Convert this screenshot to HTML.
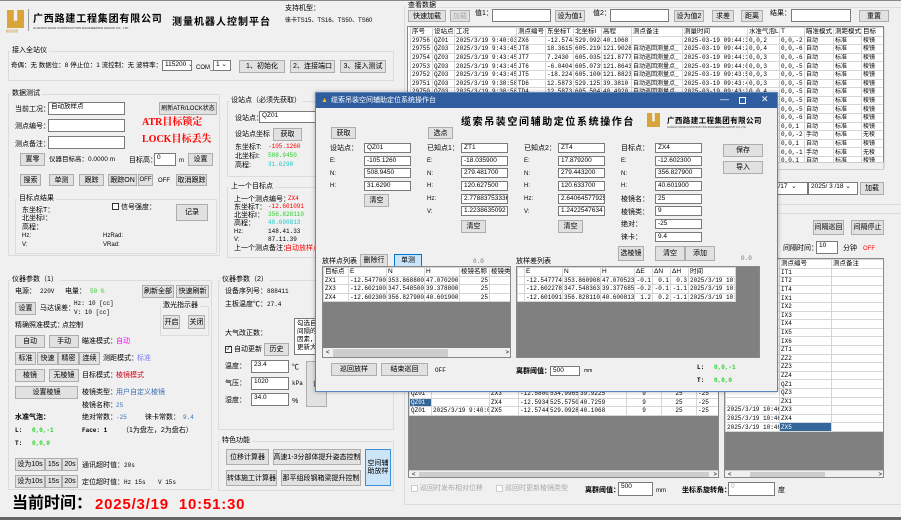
<!DOCTYPE html>
<html><head><meta charset="utf-8">
<style>
*{box-sizing:border-box;margin:0;padding:0}
body{width:901px;height:520px;overflow:hidden;background:#f0f0f0;font-family:"Liberation Sans","Noto Sans CJK SC",sans-serif;font-size:7px;color:#000;position:relative}
.a{position:absolute;white-space:nowrap;line-height:1}
.b{position:absolute;background:#e1e1e1;border:1px solid #adadad;text-align:center;font-size:7px;line-height:1;display:flex;align-items:center;justify-content:center;white-space:nowrap}
.i{position:absolute;background:#fff;border:1px solid #7a7a7a;font-size:6.5px;padding:1px 2px;line-height:1;white-space:nowrap;overflow:hidden}
.g{position:absolute;border:1px solid #dcdcdc}
.gl{position:absolute;background:#f0f0f0;padding:0 2px;font-size:7px;line-height:1;white-space:nowrap}
.m{font-family:"Liberation Mono","Noto Sans CJK SC",monospace}
table{border-collapse:collapse;table-layout:fixed}
.tb td{border:1px solid #d6d6d6;height:8.6px;padding:0 1px;font-size:6px;line-height:7px;white-space:nowrap;overflow:hidden;font-family:"Liberation Mono","Noto Sans CJK SC",monospace}
.tb tr.h td{font-family:"Liberation Sans","Noto Sans CJK SC",sans-serif;background:#fff;font-size:6.5px}
.red{color:#f00}.grn{color:#2ad02a}.cy{color:#1cc7c7}
</style></head><body>
<div style="position:absolute;left:0;top:0;width:901px;height:1px;background:#888"></div>
<div style="position:absolute;left:0;top:517px;width:901px;height:3px;background:#666"></div>

<!-- header -->
<div class="a" style="left:7px;top:10px;width:17px;height:18px;background:#d9a43a;clip-path:polygon(0 0,40% 0,40% 60%,60% 60%,60% 0,100% 0,100% 100%,0 100%)"></div>
<div class="a" style="left:6px;top:30px;font-size:3px;color:#c8962e">路建集团</div>
<div class="a" style="left:28px;top:9px;width:1px;height:22px;background:#999"></div>
<div class="a" style="left:33px;top:15px;font-size:10px;font-weight:bold;letter-spacing:0.8px">广西路建工程集团有限公司</div>
<div class="a" style="left:33px;top:27px;font-size:3px;color:#333">GUANGXI ROAD CONSTRUCTION ENGINEERING GROUP CO., LTD.</div>
<div class="a" style="left:172px;top:18px;font-size:10px;font-weight:bold;letter-spacing:1px">测量机器人控制平台</div>
<div class="a" style="left:285px;top:5px">支持机型：</div>
<div class="a" style="left:285px;top:18px;font-size:6px">徕卡TS15、TS16、TS50、TS60</div>

<!-- 接入全站仪 -->
<div class="g" style="left:8px;top:51px;width:386px;height:30px"></div>
<div class="gl" style="left:10px;top:47px">接入全站仪</div>
<div class="a" style="left:11px;top:63px;font-size:6.5px">奇偶：无 数据位：8 停止位：1 流控制：无 波特率：</div>
<div class="i" style="left:162px;top:60px;width:30px;height:11px">115200 ⌄</div>
<div class="a" style="left:196px;top:65px;font-size:6px">COM_</div>
<div class="i" style="left:213px;top:60px;width:18px;height:11px">1 ⌄</div>
<div class="b" style="left:239px;top:60px;width:46px;height:13px">1、初始化</div>
<div class="b" style="left:290px;top:60px;width:45px;height:13px">2、连接端口</div>
<div class="b" style="left:340px;top:60px;width:46px;height:13px">3、接入测试</div>

<!-- 数据测试 -->
<div class="g" style="left:8px;top:94px;width:212px;height:162px"></div>
<div class="gl" style="left:10px;top:90px">数据测试</div>
<div class="a" style="left:15px;top:106px">当前工况：</div>
<div class="i" style="left:48px;top:102px;width:77px;height:13px">自动放样点</div>
<div class="b" style="left:159px;top:102px;width:58px;height:13px;font-size:6px">刷新ATR/LOCK状态</div>
<div class="a" style="left:15px;top:123px">测点编号：</div>
<div class="i" style="left:48px;top:119px;width:77px;height:13px"></div>
<div class="a" style="left:15px;top:141px">测点备注：</div>
<div class="i" style="left:48px;top:136px;width:77px;height:13px"></div>
<div class="a red" style="left:142px;top:118px;font-size:10px;font-family:'Liberation Serif','Noto Serif CJK SC',serif;font-weight:bold">ATR目标锁定</div>
<div class="a red" style="left:142px;top:135px;font-size:10px;font-family:'Liberation Serif','Noto Serif CJK SC',serif;font-weight:bold">LOCK目标丢失</div>
<div class="b" style="left:20px;top:153px;width:25px;height:13px">置零</div>
<div class="a" style="left:49px;top:157px;font-size:6.5px">仪器目标高：0.0000 m</div>
<div class="a" style="left:129px;top:157px">目标高：</div>
<div class="i" style="left:154px;top:153px;width:22px;height:13px">0</div>
<div class="a" style="left:179px;top:158px;font-size:6px">m</div>
<div class="b" style="left:188px;top:153px;width:25px;height:13px">设置</div>
<div class="b" style="left:20px;top:174px;width:21px;height:12px">搜索</div>
<div class="b" style="left:49px;top:174px;width:25px;height:12px">单测</div>
<div class="b" style="left:79px;top:174px;width:25px;height:12px">跟踪</div>
<div class="b" style="left:108px;top:174px;width:29px;height:12px">跟踪ON</div>
<div class="b" style="left:138px;top:174px;width:15px;height:12px;font-size:6px">OFF</div>
<div class="a" style="left:158px;top:178px;font-size:6px">OFF</div>
<div class="b" style="left:176px;top:174px;width:31px;height:12px">取消跟踪</div>
<div class="g" style="left:15px;top:199px;width:202px;height:55px"></div>
<div class="gl" style="left:17px;top:195px">目标点结果</div>
<div class="a" style="left:22px;top:207px">东坐标T：</div>
<div class="a" style="left:22px;top:215px">北坐标I：</div>
<div class="a" style="left:22px;top:224px">高程：</div>
<div class="a" style="left:22px;top:233px;font-size:6px">Hz:</div>
<div class="a" style="left:22px;top:242px;font-size:6px">V:</div>
<div class="a" style="left:103px;top:233px;font-size:6px">HzRad:</div>
<div class="a" style="left:103px;top:242px;font-size:6px">VRad:</div>
<div class="a" style="left:112px;top:203px;width:7px;height:7px;border:1px solid #333;background:#fff"></div>
<div class="a" style="left:121px;top:204px">信号强度：</div>
<div class="b" style="left:176px;top:204px;width:32px;height:17px">记录</div>

<!-- 设站点 middle -->
<div class="g" style="left:227px;top:101px;width:100px;height:76px"></div>
<div class="gl" style="left:229px;top:97px">设站点（必须先获取）</div>
<div class="a" style="left:235px;top:115px">设站点：</div>
<div class="i" style="left:259px;top:111px;width:70px;height:12px">QZ01</div>
<div class="a" style="left:235px;top:131px">设站点坐标</div>
<div class="b" style="left:273px;top:128px;width:29px;height:13px">获取</div>
<div class="a" style="left:235px;top:144px">东坐标T:</div><div class="a m red" style="left:268px;top:144px;font-size:6px">-105.1260</div>
<div class="a" style="left:235px;top:153px">北坐标I:</div><div class="a m grn" style="left:268px;top:153px;font-size:6px">508.9450</div>
<div class="a" style="left:235px;top:162px">高程:</div><div class="a m cy" style="left:268px;top:162px;font-size:6px">31.6290</div>
<div class="g" style="left:227px;top:187px;width:100px;height:71px"></div>
<div class="gl" style="left:229px;top:183px">上一个目标点</div>
<div class="a" style="left:234px;top:196px">上一个测点编号：</div><div class="a m red" style="left:288px;top:196px;font-size:6px">ZX4</div>
<div class="a" style="left:234px;top:204px">东坐标T：</div><div class="a m red" style="left:268px;top:204px;font-size:6px">-12.601091</div>
<div class="a" style="left:234px;top:212px">北坐标I：</div><div class="a m grn" style="left:268px;top:212px;font-size:6px">356.828110</div>
<div class="a" style="left:234px;top:220px">高程：</div><div class="a m cy" style="left:268px;top:220px;font-size:6px">40.600813</div>
<div class="a" style="left:234px;top:229px;font-size:6px">Hz:</div><div class="a m" style="left:268px;top:229px;font-size:6px">148.41.33</div>
<div class="a" style="left:234px;top:237px;font-size:6px">V:</div><div class="a m" style="left:268px;top:237px;font-size:6px">87.11.39</div>
<div class="a" style="left:234px;top:245px">上一个测点备注：</div><div class="a red" style="left:285px;top:245px">自动放样点</div>

<!-- 仪器参数1 -->
<div class="g" style="left:8px;top:280px;width:204px;height:210px"></div>
<div class="gl" style="left:10px;top:276px">仪器参数（1）</div>
<div class="a" style="left:15px;top:288px">电源：</div><div class="a m" style="left:40px;top:289px;font-size:6px">220V</div>
<div class="a" style="left:65px;top:288px">电量：</div><div class="a m grn" style="left:90px;top:289px;font-size:6px">50 %</div>
<div class="b" style="left:142px;top:285px;width:32px;height:13px">刷新全部</div>
<div class="b" style="left:176px;top:285px;width:33px;height:13px">快速刷新</div>
<div class="b" style="left:15px;top:302px;width:21px;height:13px">设置</div>
<div class="a" style="left:40px;top:305px">马达误差：</div>
<div class="a m" style="left:74px;top:301px;font-size:6px">Hz: 10 [cc]</div>
<div class="a m" style="left:74px;top:310px;font-size:6px">V:  10 [cc]</div>
<div class="g" style="left:160px;top:306px;width:49px;height:30px"></div>
<div class="gl" style="left:161px;top:302px">激光指示器</div>
<div class="b" style="left:163px;top:315px;width:17px;height:14px">开启</div>
<div class="b" style="left:188px;top:315px;width:17px;height:14px">关闭</div>
<div class="a" style="left:15px;top:322px">精确照准模式：</div><div class="a" style="left:62px;top:322px">点控制</div>
<div class="b" style="left:15px;top:335px;width:30px;height:13px">自动</div>
<div class="b" style="left:49px;top:335px;width:30px;height:13px">手动</div>
<div class="a" style="left:82px;top:338px">瞄准模式：</div><div class="a" style="left:116px;top:338px;color:#f0f">自动</div>
<div class="b" style="left:15px;top:352px;width:21px;height:13px">标准</div>
<div class="b" style="left:37px;top:352px;width:21px;height:13px">快速</div>
<div class="b" style="left:58px;top:352px;width:21px;height:13px">精密</div>
<div class="b" style="left:79px;top:352px;width:21px;height:13px">连续</div>
<div class="a" style="left:103px;top:355px">测距模式：</div><div class="a" style="left:137px;top:355px;color:#7d7dff">标准</div>
<div class="b" style="left:15px;top:369px;width:30px;height:13px">棱镜</div>
<div class="b" style="left:49px;top:369px;width:30px;height:13px">无棱镜</div>
<div class="a" style="left:82px;top:372px">目标模式：</div><div class="a" style="left:116px;top:372px;color:#d0021b">棱镜模式</div>
<div class="b" style="left:15px;top:386px;width:63px;height:13px">设置棱镜</div>
<div class="a" style="left:82px;top:389px">棱镜类型：</div><div class="a" style="left:116px;top:389px;color:#3a6fb0">用户自定义棱镜</div>
<div class="a" style="left:82px;top:402px">棱镜名称：</div><div class="a m" style="left:116px;top:403px;font-size:6px;color:#3a6fb0">25</div>
<div class="a" style="left:15px;top:414px;font-weight:bold">水准气泡：</div>
<div class="a" style="left:82px;top:414px">绝对常数：</div><div class="a m" style="left:116px;top:415px;font-size:6px;color:#3a6fb0">-25</div>
<div class="a" style="left:145px;top:414px">徕卡常数：</div><div class="a m" style="left:183px;top:415px;font-size:6px;color:#3a6fb0">9.4</div>
<div class="a m" style="left:15px;top:428px;font-size:6px;font-weight:bold">L:</div><div class="a m grn" style="left:32px;top:428px;font-size:6px;font-weight:bold">0,0,-1</div>
<div class="a m" style="left:82px;top:428px;font-size:6px;font-weight:bold">Face:  1</div><div class="a" style="left:122px;top:427px">（1为盘左，2为盘右）</div>
<div class="a m" style="left:15px;top:441px;font-size:6px;font-weight:bold">T:</div><div class="a m grn" style="left:32px;top:441px;font-size:6px;font-weight:bold">0,0,0</div>
<div class="b" style="left:15px;top:458px;width:30px;height:13px">设为10s</div>
<div class="b" style="left:45px;top:458px;width:17px;height:13px">15s</div>
<div class="b" style="left:62px;top:458px;width:16px;height:13px">20s</div>
<div class="a" style="left:82px;top:462px">通讯超时值：</div><div class="a m" style="left:124px;top:463px;font-size:6px">20s</div>
<div class="b" style="left:15px;top:475px;width:30px;height:13px">设为10s</div>
<div class="b" style="left:45px;top:475px;width:17px;height:13px">15s</div>
<div class="b" style="left:62px;top:475px;width:16px;height:13px">20s</div>
<div class="a" style="left:82px;top:479px">定位超时值：</div><div class="a m" style="left:124px;top:480px;font-size:6px">Hz 15s</div><div class="a m" style="left:158px;top:480px;font-size:6px">V 15s</div>

<!-- 仪器参数2 -->
<div class="g" style="left:218px;top:280px;width:176px;height:150px"></div>
<div class="gl" style="left:220px;top:276px">仪器参数（2）</div>
<div class="a" style="left:225px;top:288px">设备序列号：</div><div class="a m" style="left:267px;top:289px;font-size:6px">888411</div>
<div class="a" style="left:225px;top:301px">主板温度℃：</div><div class="a m" style="left:267px;top:302px;font-size:6px">27.4</div>
<div class="a" style="left:225px;top:330px">大气改正数：</div>
<div class="i" style="left:294px;top:318px;width:30px;height:37px;line-height:8px;font-size:6.5px;white-space:normal">勾选自<br>间隔的<br>因素，<br>更新大</div>
<div class="a" style="left:225px;top:346px;width:7px;height:7px;border:1px solid #333;background:#fff;font-size:6px;line-height:5px;text-align:center">✓</div>
<div class="a" style="left:234px;top:346px">自动更新</div>
<div class="b" style="left:264px;top:343px;width:25px;height:13px">历史</div>
<div class="a" style="left:225px;top:363px">温度：</div><div class="i" style="left:251px;top:360px;width:38px;height:13px">23.4</div><div class="a" style="left:292px;top:364px">℃</div>
<div class="a" style="left:225px;top:380px">气压：</div><div class="i" style="left:251px;top:377px;width:38px;height:13px">1020</div><div class="a m" style="left:292px;top:381px;font-size:6px">kPa</div>
<div class="a" style="left:225px;top:397px">湿度：</div><div class="i" style="left:251px;top:393px;width:38px;height:13px">34.0</div><div class="a" style="left:292px;top:398px">%</div>
<div class="b" style="left:306px;top:361px;width:21px;height:46px">设</div>
<div class="g" style="left:218px;top:441px;width:176px;height:50px"></div>
<div class="gl" style="left:220px;top:437px">特色功能</div>
<div class="b" style="left:226px;top:449px;width:43px;height:16px">位移计算器</div>
<div class="b" style="left:273px;top:449px;width:88px;height:16px">高速1-3分部体提升姿态控制</div>
<div class="b" style="left:226px;top:470px;width:51px;height:16px">转体施工计算器</div>
<div class="b" style="left:281px;top:470px;width:80px;height:16px">那平组段钢箱梁提升控制</div>
<div class="b" style="left:365px;top:449px;width:26px;height:37px;background:#cce4f7;border-color:#3c8fd8;white-space:normal;line-height:8px">空间辅<br>助放样</div>

<div class="a" style="left:12px;top:496px;font-size:16px;font-weight:bold">当前时间：</div>
<div class="a red" style="left:95px;top:497px;font-size:15px;font-weight:bold;letter-spacing:0.8px">2025/3/19&nbsp; 10:51:30</div>

<!-- 查看数据 right -->
<div class="g" style="left:404px;top:7px;width:500px;height:198px"></div>
<div class="gl" style="left:406px;top:2px">查看数据</div>
<div class="b" style="left:408px;top:10px;width:38px;height:12px">快速加载</div>
<div class="b" style="left:450px;top:10px;width:20px;height:12px;color:#aaa">加载</div>
<div class="a" style="left:475px;top:10px">值1：</div><div class="i" style="left:492px;top:9px;width:59px;height:13px"></div>
<div class="b" style="left:555px;top:10px;width:30px;height:12px">设为值1</div>
<div class="a" style="left:593px;top:10px">值2：</div><div class="i" style="left:610px;top:9px;width:59px;height:13px"></div>
<div class="b" style="left:674px;top:10px;width:30px;height:12px">设为值2</div>
<div class="b" style="left:712px;top:10px;width:22px;height:12px">求差</div>
<div class="b" style="left:741px;top:10px;width:22px;height:12px">距离</div>
<div class="a" style="left:770px;top:10px">结果：</div><div class="i" style="left:791px;top:9px;width:60px;height:13px"></div>
<div class="b" style="left:859px;top:10px;width:30px;height:12px">重置</div>
<div class="a" style="left:407px;top:26px;width:477px;height:144px;background:#fff;border:1px solid #888;overflow:hidden">
<table class="tb" style="margin-left:2px;width:475px">
<colgroup><col style="width:22px"><col style="width:22px"><col style="width:62px"><col style="width:29px"><col style="width:28px"><col style="width:28px"><col style="width:30px"><col style="width:51px"><col style="width:65px"><col style="width:32px"><col style="width:25px"><col style="width:29px"><col style="width:28px"><col style="width:24px"></colgroup>
<tr class="h"><td>序号</td><td>设站点</td><td>工况</td><td>测点编号</td><td>东坐标T</td><td>北坐标I</td><td>高程</td><td>测点备注</td><td>测量时间</td><td>水准气泡L</td><td>T</td><td>瞄准模式</td><td>测距模式</td><td>目标</td></tr>
<tr><td>29756</td><td>QZ01</td><td>2025/3/19 9:40:03</td><td>ZX6</td><td>-12.5744</td><td>529.0928</td><td>40.1068</td><td></td><td>2025-03-19 09:44:32</td><td>0,0,2</td><td>0,0,-2</td><td>自动</td><td>标准</td><td>棱镜</td></tr>
<tr><td>29755</td><td>QZ03</td><td>2025/3/19 9:43:45</td><td>JT8</td><td>18.3615</td><td>605.2196</td><td>121.9028</td><td>自动巡回测量点_</td><td>2025-03-19 09:44:28</td><td>0,0,4</td><td>0,0,-6</td><td>自动</td><td>标准</td><td>棱镜</td></tr>
<tr><td>29754</td><td>QZ03</td><td>2025/3/19 9:43:45</td><td>JT7</td><td>7.2430</td><td>605.0354</td><td>121.8777</td><td>自动巡回测量点_</td><td>2025-03-19 09:44:18</td><td>0,0,3</td><td>0,0,-6</td><td>自动</td><td>标准</td><td>棱镜</td></tr>
<tr><td>29753</td><td>QZ03</td><td>2025/3/19 9:43:45</td><td>JT6</td><td>-6.0404</td><td>605.0739</td><td>121.8643</td><td>自动巡回测量点_</td><td>2025-03-19 09:44:07</td><td>0,0,3</td><td>0,0,-5</td><td>自动</td><td>标准</td><td>棱镜</td></tr>
<tr><td>29752</td><td>QZ03</td><td>2025/3/19 9:43:45</td><td>JT5</td><td>-18.2247</td><td>605.1000</td><td>121.8823</td><td>自动巡回测量点_</td><td>2025-03-19 09:43:55</td><td>0,0,3</td><td>0,0,-5</td><td>自动</td><td>标准</td><td>棱镜</td></tr>
<tr><td>29751</td><td>QZ03</td><td>2025/3/19 9:38:58</td><td>TD6</td><td>12.5873</td><td>529.1251</td><td>39.3810</td><td>自动巡回测量点_</td><td>2025-03-19 09:43:40</td><td>0,0,3</td><td>0,0,-5</td><td>自动</td><td>标准</td><td>棱镜</td></tr>
<tr><td>29750</td><td>QZ03</td><td>2025/3/19 9:38:58</td><td>TD4</td><td>12.5873</td><td>605.5047</td><td>40.4920</td><td>自动巡回测量点_</td><td>2025-03-19 09:43:28</td><td>0,0,4</td><td>0,0,-5</td><td>自动</td><td>标准</td><td>棱镜</td></tr>
<tr><td></td><td></td><td></td><td></td><td></td><td></td><td></td><td></td><td></td><td></td><td>0,0,-5</td><td>自动</td><td>标准</td><td>棱镜</td></tr>
<tr><td></td><td></td><td></td><td></td><td></td><td></td><td></td><td></td><td></td><td></td><td>0,0,-5</td><td>自动</td><td>标准</td><td>棱镜</td></tr>
<tr><td></td><td></td><td></td><td></td><td></td><td></td><td></td><td></td><td></td><td></td><td>0,0,-6</td><td>自动</td><td>标准</td><td>棱镜</td></tr>
<tr><td></td><td></td><td></td><td></td><td></td><td></td><td></td><td></td><td></td><td></td><td>0,0,1</td><td>自动</td><td>标准</td><td>棱镜</td></tr>
<tr><td></td><td></td><td></td><td></td><td></td><td></td><td></td><td></td><td></td><td></td><td>0,0,-2</td><td>手动</td><td>标准</td><td>无棱</td></tr>
<tr><td></td><td></td><td></td><td></td><td></td><td></td><td></td><td></td><td></td><td></td><td>0,0,1</td><td>自动</td><td>标准</td><td>棱镜</td></tr>
<tr><td></td><td></td><td></td><td></td><td></td><td></td><td></td><td></td><td></td><td></td><td>0,0,-1</td><td>手动</td><td>标准</td><td>无棱</td></tr>
<tr><td></td><td></td><td></td><td></td><td></td><td></td><td></td><td></td><td></td><td></td><td>0,0,1</td><td>自动</td><td>标准</td><td>棱镜</td></tr>
</table></div>
<div class="a" style="left:884px;top:27px;width:6px;height:142px;background:#f0f0f0;border-left:1px solid #ddd"></div>
<div class="a" style="left:407px;top:162px;width:477px;height:8px;background:#f0f0f0;border:1px solid #ccc"></div>
<div class="i" style="left:770px;top:182px;width:38px;height:13px">3 /17 &nbsp;⌄</div>
<div class="i" style="left:808px;top:182px;width:50px;height:13px">2025/ 3 /18 ⌄</div>
<div class="b" style="left:860px;top:182px;width:24px;height:13px">加载</div>

<!-- lower right -->
<div class="g" style="left:404px;top:213px;width:500px;height:292px"></div>
<div class="b" style="left:813px;top:220px;width:31px;height:15px">间隔巡回</div>
<div class="b" style="left:851px;top:220px;width:33px;height:15px">间隔停止</div>
<div class="a" style="left:783px;top:245px">间隔时间：</div>
<div class="i" style="left:816px;top:241px;width:22px;height:13px">10</div>
<div class="a" style="left:843px;top:245px">分钟</div>
<div class="a red" style="left:863px;top:246px;font-size:6px">OFF</div>
<!-- right list -->
<div class="a" style="left:724px;top:258px;width:160px;height:220px;background:#808080;border:1px solid #888;overflow:hidden">
<table class="tb" style="background:#fff;width:159px">
<colgroup><col style="width:54px"><col style="width:52px"><col style="width:53px"></colgroup>
<tr class="h"><td></td><td>测点编号</td><td>测点备注</td></tr>
<tr><td></td><td>IT1</td><td></td></tr><tr><td></td><td>IT2</td><td></td></tr><tr><td></td><td>IT4</td><td></td></tr>
<tr><td></td><td>IX1</td><td></td></tr><tr><td></td><td>IX2</td><td></td></tr><tr><td></td><td>IX3</td><td></td></tr>
<tr><td></td><td>IX4</td><td></td></tr><tr><td></td><td>IX5</td><td></td></tr><tr><td></td><td>IX6</td><td></td></tr>
<tr><td></td><td>ZT1</td><td></td></tr><tr><td></td><td>ZZ2</td><td></td></tr><tr><td></td><td>ZZ3</td><td></td></tr>
<tr><td></td><td>ZZ4</td><td></td></tr><tr><td></td><td>QZ1</td><td></td></tr><tr><td></td><td>QZ3</td><td></td></tr>
<tr><td></td><td>ZX1</td><td></td></tr>
<tr><td>2025/3/19 10:46:</td><td>ZX3</td><td></td></tr>
<tr><td>2025/3/19 10:46:</td><td>ZX4</td><td></td></tr>
<tr><td>2025/3/19 10:46:</td><td style="background:#336699;color:#fff">ZX5</td><td></td></tr>
</table>
<div class="a" style="left:0;top:211px;width:160px;height:9px;background:#f0f0f0;border-top:1px solid #ccc"><span style="position:absolute;left:3px;top:1px;font-size:6px">&lt;</span><span style="position:absolute;left:25px;top:1px;width:75px;height:6px;background:#cdcdcd"></span><span style="position:absolute;right:3px;top:1px;font-size:6px">&gt;</span></div>
</div>
<!-- bottom left table -->
<div class="a" style="left:408px;top:370px;width:311px;height:108px;background:#808080;border:1px solid #888;overflow:hidden">
<table class="tb" style="background:#fff;width:310px">
<colgroup><col style="width:22px"><col style="width:58px"><col style="width:29px"><col style="width:30px"><col style="width:30px"><col style="width:48px"><col style="width:35px"><col style="width:35px"><col style="width:23px"></colgroup>
<tr><td colspan="9" style="height:18px"></td></tr>
<tr><td>QZ01</td><td></td><td>ZX3</td><td>-12.5800</td><td>534.9965</td><td>39.9225</td><td style="text-align:center">9</td><td style="text-align:center">25</td><td>-25</td></tr>
<tr><td style="background:#336699;color:#fff">QZ01</td><td></td><td>ZX4</td><td>-12.5934</td><td>525.5750</td><td>40.7259</td><td style="text-align:center">9</td><td style="text-align:center">25</td><td>-25</td></tr>
<tr><td>QZ01</td><td>2025/3/19 9:40:03</td><td>ZX5</td><td>-12.5744</td><td>529.0928</td><td>40.1068</td><td style="text-align:center">9</td><td style="text-align:center">25</td><td>-25</td></tr>
</table>
<div class="a" style="left:0;top:99px;width:311px;height:9px;background:#f0f0f0;border-top:1px solid #ccc"><span style="position:absolute;left:3px;top:1px;font-size:6px">&lt;</span><span style="position:absolute;left:10px;top:1px;width:290px;height:6px;background:#cdcdcd"></span><span style="position:absolute;right:3px;top:1px;font-size:6px">&gt;</span></div>
</div>
<div class="a" style="left:411px;top:485px;width:7px;height:7px;border:1px solid #ccc;background:#fff"></div>
<div class="a" style="left:420px;top:485px;color:#aaa">巡回时发布相对位移</div>
<div class="a" style="left:496px;top:485px;width:7px;height:7px;border:1px solid #ccc;background:#fff"></div>
<div class="a" style="left:505px;top:485px;color:#aaa">巡回时更新棱镜类型</div>
<div class="a" style="left:585px;top:487px;font-weight:bold">离群阈值：</div>
<div class="i" style="left:618px;top:482px;width:35px;height:14px">500</div>
<div class="a" style="left:656px;top:488px;font-size:6px">mm</div>
<div class="a" style="left:682px;top:487px;font-weight:bold">坐标系旋转角：</div>
<div class="i" style="left:728px;top:482px;width:47px;height:14px;color:#aaa">0</div>
<div class="a" style="left:778px;top:487px">度</div>

<!-- Dialog -->
<div class="a" style="left:315px;top:92px;width:463px;height:300px;background:#f0f0f0;border:1px solid #5d86c0;box-shadow:0 0 4px rgba(0,0,0,.3)">
<div style="position:absolute;left:0;top:0;width:461px;height:15px;background:#2f5d9f"></div>
<div class="a" style="left:5px;top:4px;color:#f3b632;font-size:7px">▲</div>
<div class="a" style="left:15px;top:4px;color:#fff;font-size:7px">缆索吊装空间辅助定位系统操作台</div>
<div class="a" style="left:404px;top:2px;color:#fff;font-size:9px">—</div>
<div class="a" style="left:423px;top:4px;width:7px;height:7px;border:1px solid #fff"></div>
<div class="a" style="left:445px;top:2px;color:#fff;font-size:9px">✕</div>
</div>
<div class="a" style="left:461px;top:118px;font-size:10px;font-weight:bold;letter-spacing:1.6px">缆索吊装空间辅助定位系统操作台</div>
<div class="a" style="left:647px;top:113px;width:13px;height:14px;background:#d9a43a;clip-path:polygon(0 0,40% 0,40% 60%,60% 60%,60% 0,100% 0,100% 100%,0 100%)"></div>
<div class="a" style="left:667px;top:117px;font-size:7.5px;font-weight:bold;letter-spacing:0.4px">广西路建工程集团有限公司</div>
<div class="a" style="left:667px;top:127px;font-size:2.5px;color:#444">GUANGXI ROAD CONSTRUCTION ENGINEERING GROUP CO.,LTD.</div>
<div class="b" style="left:331px;top:127px;width:25px;height:12px">获取</div>
<div class="b" style="left:428px;top:127px;width:25px;height:12px">选点</div>
<div class="a" style="left:330px;top:145px">设站点：</div>
<div class="a" style="left:330px;top:158px;font-size:6px">E:</div>
<div class="a" style="left:330px;top:171px;font-size:6px">N:</div>
<div class="a" style="left:330px;top:183px;font-size:6px">H:</div>
<div class="i" style="left:364px;top:143px;width:47px;height:10px">QZ01</div>
<div class="i" style="left:364px;top:156px;width:47px;height:10px">-105.1260</div>
<div class="i" style="left:364px;top:168px;width:47px;height:10px">508.9450</div>
<div class="i" style="left:364px;top:181px;width:47px;height:10px">31.6290</div>
<div class="b" style="left:364px;top:194px;width:25px;height:13px">清空</div>
<div class="a" style="left:427px;top:145px">已知点1：</div>
<div class="a" style="left:427px;top:158px;font-size:6px">E:</div>
<div class="a" style="left:427px;top:171px;font-size:6px">N:</div>
<div class="a" style="left:427px;top:183px;font-size:6px">H:</div>
<div class="a" style="left:427px;top:196px;font-size:6px">Hz:</div>
<div class="a" style="left:427px;top:209px;font-size:6px">V:</div>
<div class="i" style="left:461px;top:143px;width:47px;height:10px">ZT1</div>
<div class="i" style="left:461px;top:156px;width:47px;height:10px">-18.035900</div>
<div class="i" style="left:461px;top:168px;width:47px;height:10px">279.481700</div>
<div class="i" style="left:461px;top:181px;width:47px;height:10px">120.627500</div>
<div class="i" style="left:461px;top:194px;width:47px;height:10px">2.778837533361</div>
<div class="i" style="left:461px;top:206px;width:47px;height:10px">1.2238635092</div>
<div class="b" style="left:461px;top:220px;width:25px;height:13px">清空</div>
<div class="a" style="left:524px;top:145px">已知点2：</div>
<div class="a" style="left:524px;top:158px;font-size:6px">E:</div>
<div class="a" style="left:524px;top:171px;font-size:6px">N:</div>
<div class="a" style="left:524px;top:183px;font-size:6px">H:</div>
<div class="a" style="left:524px;top:196px;font-size:6px">Hz:</div>
<div class="a" style="left:524px;top:209px;font-size:6px">V:</div>
<div class="i" style="left:558px;top:143px;width:47px;height:10px">ZT4</div>
<div class="i" style="left:558px;top:156px;width:47px;height:10px">17.879200</div>
<div class="i" style="left:558px;top:168px;width:47px;height:10px">279.443200</div>
<div class="i" style="left:558px;top:181px;width:47px;height:10px">120.633700</div>
<div class="i" style="left:558px;top:194px;width:47px;height:10px">2.640645779256</div>
<div class="i" style="left:558px;top:206px;width:47px;height:10px">1.2422547634</div>
<div class="b" style="left:558px;top:220px;width:25px;height:13px">清空</div>
<div class="a" style="left:621px;top:145px">目标点：</div>
<div class="a" style="left:621px;top:158px;font-size:6px">E:</div>
<div class="a" style="left:621px;top:171px;font-size:6px">N:</div>
<div class="a" style="left:621px;top:183px;font-size:6px">H:</div>
<div class="a" style="left:621px;top:196px">棱镜名：</div>
<div class="a" style="left:621px;top:209px">棱镜类：</div>
<div class="a" style="left:621px;top:221px">绝对：</div>
<div class="a" style="left:621px;top:234px">徕卡：</div>
<div class="i" style="left:655px;top:143px;width:47px;height:10px">ZX4</div>
<div class="i" style="left:655px;top:156px;width:47px;height:10px">-12.602300</div>
<div class="i" style="left:655px;top:168px;width:47px;height:10px">356.827900</div>
<div class="i" style="left:655px;top:181px;width:47px;height:10px">40.601900</div>
<div class="i" style="left:655px;top:194px;width:47px;height:10px">25</div>
<div class="i" style="left:655px;top:206px;width:47px;height:10px">9</div>
<div class="i" style="left:655px;top:219px;width:47px;height:10px">-25</div>
<div class="i" style="left:655px;top:232px;width:47px;height:10px">9.4</div>
<div class="b" style="left:618px;top:246px;width:26px;height:15px">选棱镜</div>
<div class="b" style="left:655px;top:246px;width:30px;height:15px">清空</div>
<div class="b" style="left:685px;top:246px;width:30px;height:15px">添加</div>
<div class="b" style="left:723px;top:144px;width:40px;height:13px">保存</div>
<div class="b" style="left:723px;top:161px;width:40px;height:13px">导入</div>
<div class="a m" style="left:741px;top:256px;font-size:6px;color:#777">0.0</div>
<div class="a" style="left:322px;top:258px">放样点列表</div>
<div class="b" style="left:360px;top:254px;width:28px;height:13px">删除行</div>
<div class="b" style="left:394px;top:254px;width:28px;height:13px;background:#cce4f7;border:1px solid #0078d7">单测</div>
<div class="a m" style="left:473px;top:259px;font-size:6px;color:#777">0.0</div>
<div class="a" style="left:516px;top:258px">放样差列表</div>
<div class="a" style="left:322px;top:266px;width:189px;height:92px;background:#808080;border:1px solid #888;overflow:hidden">
<table class="tb" style="background:#fff;width:188px">
<colgroup><col style="width:25px"><col style="width:38px"><col style="width:38px"><col style="width:35px"><col style="width:30px"><col style="width:22px"></colgroup>
<tr class="h"><td>目标点</td><td>E</td><td>N</td><td>H</td><td>棱镜名称</td><td>棱镜类</td></tr>
<tr><td>ZX1</td><td style="text-align:right">-12.547700</td><td>353.868800</td><td>47.070200</td><td style="text-align:right">25</td><td></td></tr>
<tr><td>ZX3</td><td style="text-align:right">-12.602100</td><td>347.548500</td><td>39.378800</td><td style="text-align:right">25</td><td></td></tr>
<tr><td>ZX4</td><td style="text-align:right">-12.602300</td><td>356.827900</td><td>40.601900</td><td style="text-align:right">25</td><td></td></tr>
</table>
<div class="a" style="left:0;top:81px;width:189px;height:10px;background:#f0f0f0"><span style="position:absolute;left:3px;top:2px;font-size:6px">&lt;</span><span style="position:absolute;left:10px;top:1px;width:115px;height:8px;background:#cdcdcd"></span><span style="position:absolute;right:3px;top:2px;font-size:6px">&gt;</span></div>
</div>
<div class="a" style="left:516px;top:266px;width:244px;height:92px;background:#808080;border:1px solid #888;overflow:hidden">
<table class="tb" style="background:#fff;width:218px">
<colgroup><col style="width:7px"><col style="width:38px"><col style="width:38px"><col style="width:34px"><col style="width:18px"><col style="width:18px"><col style="width:18px"><col style="width:47px"></colgroup>
<tr class="h"><td></td><td>E</td><td>N</td><td>H</td><td>ΔE</td><td>ΔN</td><td>ΔH</td><td>时间</td></tr>
<tr><td></td><td>-12.547774</td><td>353.860908</td><td>47.070523</td><td style="text-align:right">-0.1</td><td style="text-align:right">0.1</td><td style="text-align:right">0.3</td><td>2025/3/19 10:50:34</td></tr>
<tr><td></td><td>-12.602278</td><td>347.548363</td><td>39.377685</td><td style="text-align:right">-0.2</td><td style="text-align:right">-0.1</td><td style="text-align:right">-1.1</td><td>2025/3/19 10:50:44</td></tr>
<tr><td></td><td>-12.601091</td><td>356.828110</td><td>40.600813</td><td style="text-align:right">1.2</td><td style="text-align:right">0.2</td><td style="text-align:right">-1.1</td><td>2025/3/19 10:50:52</td></tr>
</table></div>
<div class="b" style="left:331px;top:363px;width:46px;height:13px">巡回放样</div>
<div class="b" style="left:381px;top:363px;width:47px;height:13px">结束巡回</div>
<div class="a m" style="left:435px;top:368px;font-size:6px">OFF</div>
<div class="a" style="left:516px;top:368px;font-weight:bold">离群阈值：</div>
<div class="i" style="left:550px;top:366px;width:30px;height:10px">500</div>
<div class="a" style="left:584px;top:369px;font-size:5px">mm</div>
<div class="a m" style="left:697px;top:365px;font-size:6px;font-weight:bold">L:</div><div class="a m grn" style="left:714px;top:365px;font-size:6px;font-weight:bold">0,0,-1</div>
<div class="a m" style="left:697px;top:378px;font-size:6px;font-weight:bold">T:</div><div class="a m grn" style="left:714px;top:378px;font-size:6px;font-weight:bold">0,0,0</div>
</body></html>
